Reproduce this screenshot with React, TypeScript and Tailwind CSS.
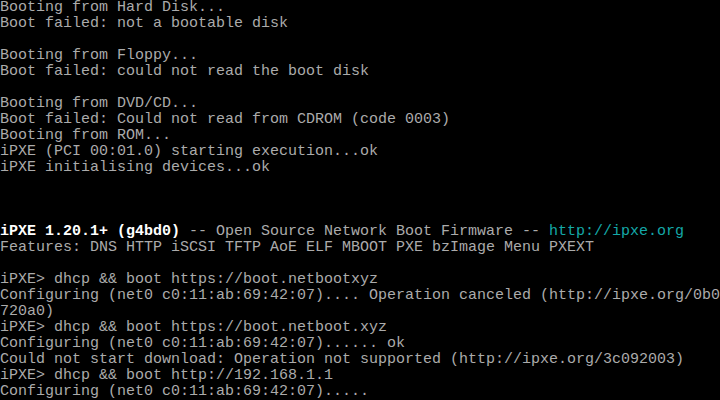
import React from 'react';

type Seg = { text: string; tone?: 'bright' | 'cyan' };

const lines: (string | Seg[])[] = [
  'Booting from Hard Disk...',
  'Boot failed: not a bootable disk',
  '',
  'Booting from Floppy...',
  'Boot failed: could not read the boot disk',
  '',
  'Booting from DVD/CD...',
  'Boot failed: Could not read from CDROM (code 0003)',
  'Booting from ROM...',
  'iPXE (PCI 00:01.0) starting execution...ok',
  'iPXE initialising devices...ok',
  '',
  '',
  '',
  [
    { text: 'iPXE 1.20.1+ (g4bd0)', tone: 'bright' },
    { text: ' -- Open Source Network Boot Firmware -- ' },
    { text: 'http://ipxe.org', tone: 'cyan' },
  ],
  'Features: DNS HTTP iSCSI TFTP AoE ELF MBOOT PXE bzImage Menu PXEXT',
  '',
  'iPXE> dhcp && boot https://boot.netbootxyz',
  'Configuring (net0 c0:11:ab:69:42:07).... Operation canceled (http://ipxe.org/0b0',
  '720a0)',
  'iPXE> dhcp && boot https://boot.netboot.xyz',
  'Configuring (net0 c0:11:ab:69:42:07)...... ok',
  'Could not start download: Operation not supported (http://ipxe.org/3c092003)',
  'iPXE> dhcp && boot http://192.168.1.1',
  'Configuring (net0 c0:11:ab:69:42:07).....',
];

const toneClass = (tone?: Seg['tone']) => {
  if (tone === 'bright') return 'text-white font-bold';
  if (tone === 'cyan') return 'text-[#14a8a8]';
  return 'text-[#ababab]';
};

export default function App() {
  return (
    <div className="w-[720px] h-[400px] bg-black overflow-hidden font-['Liberation_Mono','DejaVu_Sans_Mono',monospace] text-[15px] leading-[16px] text-[#ababab]">
      {lines.map((line, i) => (
        <div key={i} className="h-[16px] whitespace-pre">
          {typeof line === 'string'
            ? line
            : line.map((seg, j) => (
                <span key={j} className={toneClass(seg.tone)}>
                  {seg.text}
                </span>
              ))}
        </div>
      ))}
    </div>
  );
}
